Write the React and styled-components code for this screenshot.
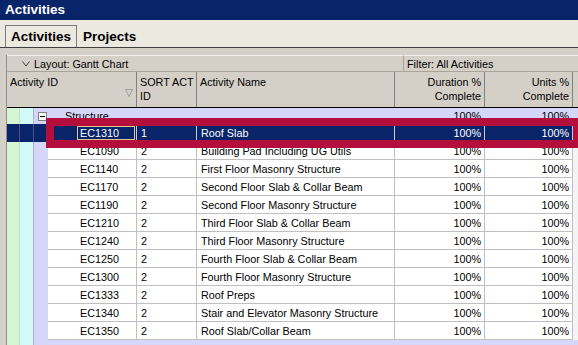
import React from 'react'
import styled, { createGlobalStyle } from 'styled-components'

const GREEN = '#d4f6d4';
const CYAN = '#d2f8f8';
const LAVENDER = '#d6d6fa';
const NAVY = '#0a246a';
const COLS = '13px 14px 14px 89px 60px 198px 90px 88px 1fr';

const GlobalStyle = createGlobalStyle`
  html, body { margin: 0; padding: 0; }
  body {
    font-family: "Liberation Sans", Arial, sans-serif;
    font-size: 10.8px;
    overflow: hidden;
  }
  * { box-sizing: border-box; }
`;

const Window = styled.div`
  position: relative;
  width: 578px;
  height: 345px;
  overflow: hidden;
  background: #d4d0c8;
  display: flex;
  flex-direction: column;
`;

const TitleBar = styled.div`
  height: 20px;
  background: ${NAVY};
  color: #fff;
  font-weight: bold;
  font-size: 13.5px;
  line-height: 20px;
  padding-left: 5px;
`;

const TabStrip = styled.div`
  height: 28px;
  background: #ece9e0;
  border-bottom: 1px solid #404040;
  display: flex;
  align-items: flex-end;
  padding-left: 5px;
`;

const Tab = styled.div`
  height: 22px;
  line-height: 21px;
  padding: 0 5px;
  font-weight: bold;
  font-size: 13.5px;
  color: #000;
  border: 1px solid ${p => (p.active ? '#7a7a7a' : 'transparent')};
  border-bottom: none;
`;

const Panel = styled.div`
  flex: 1;
  min-height: 0;
  padding: 7px 0 0 6px;
  display: flex;
  flex-direction: column;
`;

const Frame = styled.div`
  flex: 1;
  min-height: 0;
  display: flex;
  flex-direction: column;
  border-left: 1px solid #909090;
`;

const Toolbar = styled.div`
  height: 17px;
  display: grid;
  grid-template-columns: 396px 1fr;
`;

const ToolSection = styled.div`
  display: flex;
  align-items: center;
  gap: 4px;
  padding-left: ${p => p.pad}px;
  border-top: 1px solid #f4f2ee;
  border-left: 1px solid ${p => (p.divider ? '#a8a49c' : 'transparent')};
  border-bottom: 1px solid #a8a49c;
  color: #000;
`;

const Header = styled.div`
  height: 36px;
  display: grid;
  grid-template-columns: ${COLS};
  border-bottom: 1px solid #000;
`;

const HeadCell = styled.div`
  grid-column: span ${p => p.span || 1};
  display: flex;
  justify-content: ${p => (p.right ? 'flex-end' : 'space-between')};
  padding: 3px 3px 0 3px;
  border-right: 1px solid #808080;
  color: #000;
`;

const HeadText = styled.span`
  line-height: 14px;
  white-space: nowrap;
  text-align: ${p => (p.right ? 'right' : 'left')};
`;

const SortMark = styled.svg`
  align-self: center;
  margin-top: 4px;
`;

const Body = styled.div`
  flex: 1;
  min-height: 0;
  overflow: hidden;
  display: flex;
  flex-direction: column;
`;

const Row = styled.div`
  flex: none;
  display: grid;
  grid-template-columns: ${COLS};
  height: ${p => p.h || 18}px;
  color: ${p => (p.selected ? '#fff' : '#000')};
`;

const Filler = styled(Row)`
  flex: 1;
  height: auto;
`;

const Stripe = styled.div`
  background: ${p => (p.selected ? NAVY : p.tone)};
  border-right: 1px solid ${p => (p.selected ? '#44548a' : p.line || 'transparent')};
`;

const Cell = styled.div`
  grid-column: span ${p => p.span || 1};
  display: flex;
  align-items: center;
  justify-content: ${p => (p.right ? 'flex-end' : 'flex-start')};
  white-space: nowrap;
  overflow: hidden;
  background: ${p => (p.selected ? NAVY : p.bg || '#fff')};
  border-right: 1px solid ${p => (p.selected ? '#c4cce4' : p.noLine ? 'transparent' : '#c0c0c0')};
  border-bottom: 1px solid ${p => (p.selected ? NAVY : p.noLine ? 'transparent' : '#c0c0c0')};
  padding: 0 ${p => (p.right ? 3 : 0)}px 0 ${p => (p.right ? 0 : p.indent ?? 4)}px;
`;

const GroupLabel = styled.div`
  grid-column: span 4;
  display: flex;
  align-items: center;
  padding-left: 4px;
  background: ${LAVENDER};
  white-space: nowrap;
`;

const Toggle = styled.span`
  width: 9px;
  height: 9px;
  margin-right: 18px;
  margin-top: 1px;
  border: 1px solid #808080;
  background: #fff;
  position: relative;
  &::after {
    content: '';
    position: absolute;
    left: 1px;
    right: 1px;
    top: 3px;
    height: 1px;
    background: #000;
  }
`;

const Editor = styled.span`
  display: flex;
  align-items: center;
  width: 58px;
  height: 14px;
  margin-left: 29px;
  padding-left: 2px;
  border: 1px solid #e4c48e;
`;

const Callout = styled.div`
  position: absolute;
  left: 46px;
  top: 118px;
  width: 534px;
  height: 30px;
  border: 8px solid #b40f3c;
  border-right-width: 7px;
  pointer-events: none;
`;

const rows = [
  ['EC1310', '1', 'Roof Slab', true],
  ['EC1090', '2', 'Building Pad Including UG Utils'],
  ['EC1140', '2', 'First Floor Masonry Structure'],
  ['EC1170', '2', 'Second Floor Slab & Collar Beam'],
  ['EC1190', '2', 'Second Floor Masonry Structure'],
  ['EC1210', '2', 'Third Floor Slab & Collar Beam'],
  ['EC1240', '2', 'Third Floor Masonry Structure'],
  ['EC1250', '2', 'Fourth Floor Slab & Collar Beam'],
  ['EC1300', '2', 'Fourth Floor Masonry Structure'],
  ['EC1333', '2', 'Roof Preps'],
  ['EC1340', '2', 'Stair and Elevator Masonry Structure'],
  ['EC1350', '2', 'Roof Slab/Collar Beam'],
];

const Stripes = ({ selected }) => (
  <>
    <Stripe tone={GREEN} selected={selected} line="#c4e4c4" />
    <Stripe tone={CYAN} selected={selected} line="#a8b8c8" />
    <Stripe tone={LAVENDER} selected={selected} />
  </>
);

const App = () => {
  return (
    <Window>
      <GlobalStyle />
      <TitleBar>Activities</TitleBar>
      <TabStrip>
        <Tab active>Activities</Tab>
        <Tab>Projects</Tab>
      </TabStrip>
      <Panel>
        <Frame>
          <Toolbar>
            <ToolSection pad={14}>
              <svg width="8" height="6" viewBox="0 0 8 6">
                <polyline points="0.5,0.5 4,5 7.5,0.5" fill="none" stroke="#404040" strokeWidth="1" />
              </svg>
              Layout: Gantt Chart
            </ToolSection>
            <ToolSection pad={3} divider>Filter: All Activities</ToolSection>
          </Toolbar>
          <Header>
            <HeadCell span={4}>
              <HeadText>Activity ID</HeadText>
              <SortMark width="8" height="8" viewBox="0 0 8 8">
                <polygon points="0.5,0.5 7.5,0.5 4,7.5" fill="none" stroke="#a0a0a0" />
              </SortMark>
            </HeadCell>
            <HeadCell><HeadText>SORT ACT<br />ID</HeadText></HeadCell>
            <HeadCell><HeadText>Activity Name</HeadText></HeadCell>
            <HeadCell right><HeadText right>Duration %<br />Complete</HeadText></HeadCell>
            <HeadCell right><HeadText right>Units %<br />Complete</HeadText></HeadCell>
            <HeadCell />
          </Header>
          <Body>
            <Row h={16}>
              <Stripe tone={GREEN} line="#c4e4c4" />
              <Stripe tone={CYAN} line="#a8b8c8" />
              <GroupLabel>
                <Toggle />
                Structure
              </GroupLabel>
              <Cell right bg={LAVENDER} noLine>100%</Cell>
              <Cell right bg={LAVENDER} noLine>100%</Cell>
              <Cell bg={LAVENDER} noLine />
            </Row>
            {rows.map(([id, sort, name, selected]) => (
              <Row key={id} selected={selected}>
                <Stripes selected={selected} />
                <Cell selected={selected} indent={selected ? 0 : 32}>
                  {selected ? <Editor>{id}</Editor> : id}
                </Cell>
                <Cell selected={selected}>{sort}</Cell>
                <Cell selected={selected}>{name}</Cell>
                <Cell selected={selected} right>100%</Cell>
                <Cell selected={selected} right>100%</Cell>
                <Cell bg="#f4f4f4" noLine />
              </Row>
            ))}
            <Filler>
              <Stripe tone={GREEN} line="#c4e4c4" />
              <Stripe tone={CYAN} line="#a8b8c8" />
              <Cell bg={LAVENDER} noLine span={7} />
            </Filler>
          </Body>
        </Frame>
      </Panel>
      <Callout />
    </Window>
  )
}

export default App;
